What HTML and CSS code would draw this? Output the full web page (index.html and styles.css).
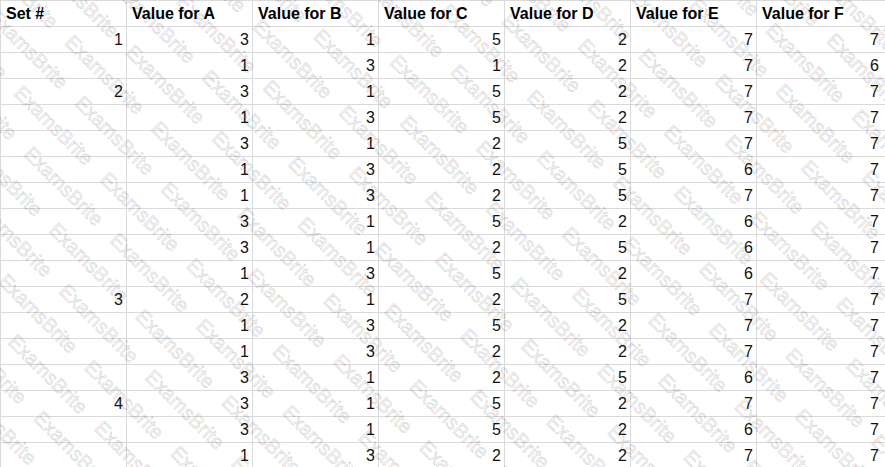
FILE: index.html
```html
<!DOCTYPE html>
<html>
<head>
<meta charset="utf-8">
<link rel="stylesheet" href="styles.css">
</head>
<body>
<div class="sheet">
  <div class="grid">
    <div class="cell head">Set #</div><div class="cell head">Value for A</div><div class="cell head">Value for B</div><div class="cell head">Value for C</div><div class="cell head">Value for D</div><div class="cell head">Value for E</div><div class="cell head">Value for F</div>
    <div class="cell">1</div><div class="cell">3</div><div class="cell">1</div><div class="cell">5</div><div class="cell">2</div><div class="cell">7</div><div class="cell">7</div>
    <div class="cell"></div><div class="cell">1</div><div class="cell">3</div><div class="cell">1</div><div class="cell">2</div><div class="cell">7</div><div class="cell">6</div>
    <div class="cell">2</div><div class="cell">3</div><div class="cell">1</div><div class="cell">5</div><div class="cell">2</div><div class="cell">7</div><div class="cell">7</div>
    <div class="cell"></div><div class="cell">1</div><div class="cell">3</div><div class="cell">5</div><div class="cell">2</div><div class="cell">7</div><div class="cell">7</div>
    <div class="cell"></div><div class="cell">3</div><div class="cell">1</div><div class="cell">2</div><div class="cell">5</div><div class="cell">7</div><div class="cell">7</div>
    <div class="cell"></div><div class="cell">1</div><div class="cell">3</div><div class="cell">2</div><div class="cell">5</div><div class="cell">6</div><div class="cell">7</div>
    <div class="cell"></div><div class="cell">1</div><div class="cell">3</div><div class="cell">2</div><div class="cell">5</div><div class="cell">7</div><div class="cell">7</div>
    <div class="cell"></div><div class="cell">3</div><div class="cell">1</div><div class="cell">5</div><div class="cell">2</div><div class="cell">6</div><div class="cell">7</div>
    <div class="cell"></div><div class="cell">3</div><div class="cell">1</div><div class="cell">2</div><div class="cell">5</div><div class="cell">6</div><div class="cell">7</div>
    <div class="cell"></div><div class="cell">1</div><div class="cell">3</div><div class="cell">5</div><div class="cell">2</div><div class="cell">6</div><div class="cell">7</div>
    <div class="cell">3</div><div class="cell">2</div><div class="cell">1</div><div class="cell">2</div><div class="cell">5</div><div class="cell">7</div><div class="cell">7</div>
    <div class="cell"></div><div class="cell">1</div><div class="cell">3</div><div class="cell">5</div><div class="cell">2</div><div class="cell">7</div><div class="cell">7</div>
    <div class="cell"></div><div class="cell">1</div><div class="cell">3</div><div class="cell">2</div><div class="cell">2</div><div class="cell">7</div><div class="cell">7</div>
    <div class="cell"></div><div class="cell">3</div><div class="cell">1</div><div class="cell">2</div><div class="cell">5</div><div class="cell">6</div><div class="cell">7</div>
    <div class="cell">4</div><div class="cell">3</div><div class="cell">1</div><div class="cell">5</div><div class="cell">2</div><div class="cell">7</div><div class="cell">7</div>
    <div class="cell"></div><div class="cell">3</div><div class="cell">1</div><div class="cell">5</div><div class="cell">2</div><div class="cell">6</div><div class="cell">7</div>
    <div class="cell"></div><div class="cell">1</div><div class="cell">3</div><div class="cell">2</div><div class="cell">2</div><div class="cell">7</div><div class="cell">7</div>
  </div>
  <div class="watermark" id="wm"></div>
</div>
<script src="script.js"></script>
</body>
</html>
```

FILE: styles.css
```css
html, body {
  margin: 0;
  padding: 0;
  background: #ffffff;
  overflow: hidden;
}

.sheet {
  position: relative;
  width: 885px;
  height: 467px;
  overflow: hidden;
  font-family: "Liberation Sans", Arial, sans-serif;
  font-size: 16px;
  color: #111111;
}

.grid {
  display: grid;
  grid-template-columns: repeat(6, 126px) 140px;
  grid-auto-rows: 26px;
  border-top: 1px solid #dadada;
  border-left: 1px solid #dadada;
  width: max-content;
}

.cell {
  box-sizing: border-box;
  border-right: 1px solid #dadada;
  border-bottom: 1px solid #dadada;
  text-align: right;
  padding: 0 3px 0 4px;
  line-height: 25px;
  white-space: nowrap;
}

.head {
  font-weight: bold;
  text-align: left;
  padding-left: 5px;
  color: #000000;
}

.sheet .cell:nth-child(7n) {
  padding-right: 17px;
}

.watermark {
  position: absolute;
  left: -700px;
  top: -800px;
  width: 2300px;
  height: 2100px;
  transform: rotate(45deg);
  transform-origin: 50% 50%;
  pointer-events: none;
  font-family: "Liberation Sans", Arial, sans-serif;
  font-size: 20px;
  line-height: 36px;
  white-space: nowrap;
  word-spacing: 14px;
  color: rgba(0, 0, 0, 0.04);
  -webkit-text-stroke: 0.7px rgba(0, 0, 0, 0.17);
}

.wm-line:nth-child(2n) {
  padding-left: 50px;
}
```

FILE: script.js
```js
(function () {
  var wm = document.getElementById('wm');
  var text = new Array(26).join('ExamsBrite ');
  for (var i = 0; i < 70; i++) {
    var line = document.createElement('div');
    line.className = 'wm-line';
    line.textContent = text;
    wm.appendChild(line);
  }
})();
```
